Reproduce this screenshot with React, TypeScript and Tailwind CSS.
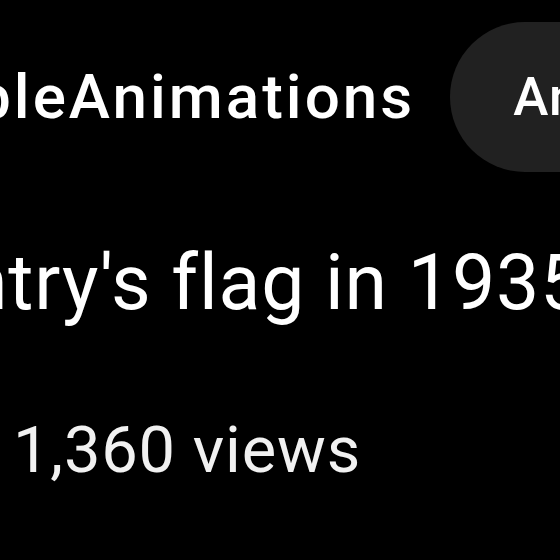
import React from 'react';

const App: React.FC = () => {
  return (
    <div className="w-[560px] h-[560px] bg-black overflow-hidden text-white font-['Roboto',sans-serif]">
      <div className="flex items-center pt-[22px] whitespace-nowrap">
        <span className="ml-[-24px] text-[62px] leading-none font-medium tracking-[3px] shrink-0">bleAnimations</span>
        <div className="ml-[35px] h-[150px] shrink-0 rounded-full bg-[#212121] pl-[63px] pr-[60px] flex items-center">
          <span className="text-[53px] leading-none font-medium tracking-[1px]">Analytics</span>
        </div>
      </div>
      <div className="mt-[73px] ml-[-35px] whitespace-nowrap text-[77px] leading-none tracking-[0.8px]">
        ntry's flag in 1935
      </div>
      <div className="mt-[96px] ml-[13px] whitespace-nowrap text-[65px] leading-none tracking-[0.8px] text-[#f1f1f1]">
        1,360 views
      </div>
    </div>
  );
};

export default App;
